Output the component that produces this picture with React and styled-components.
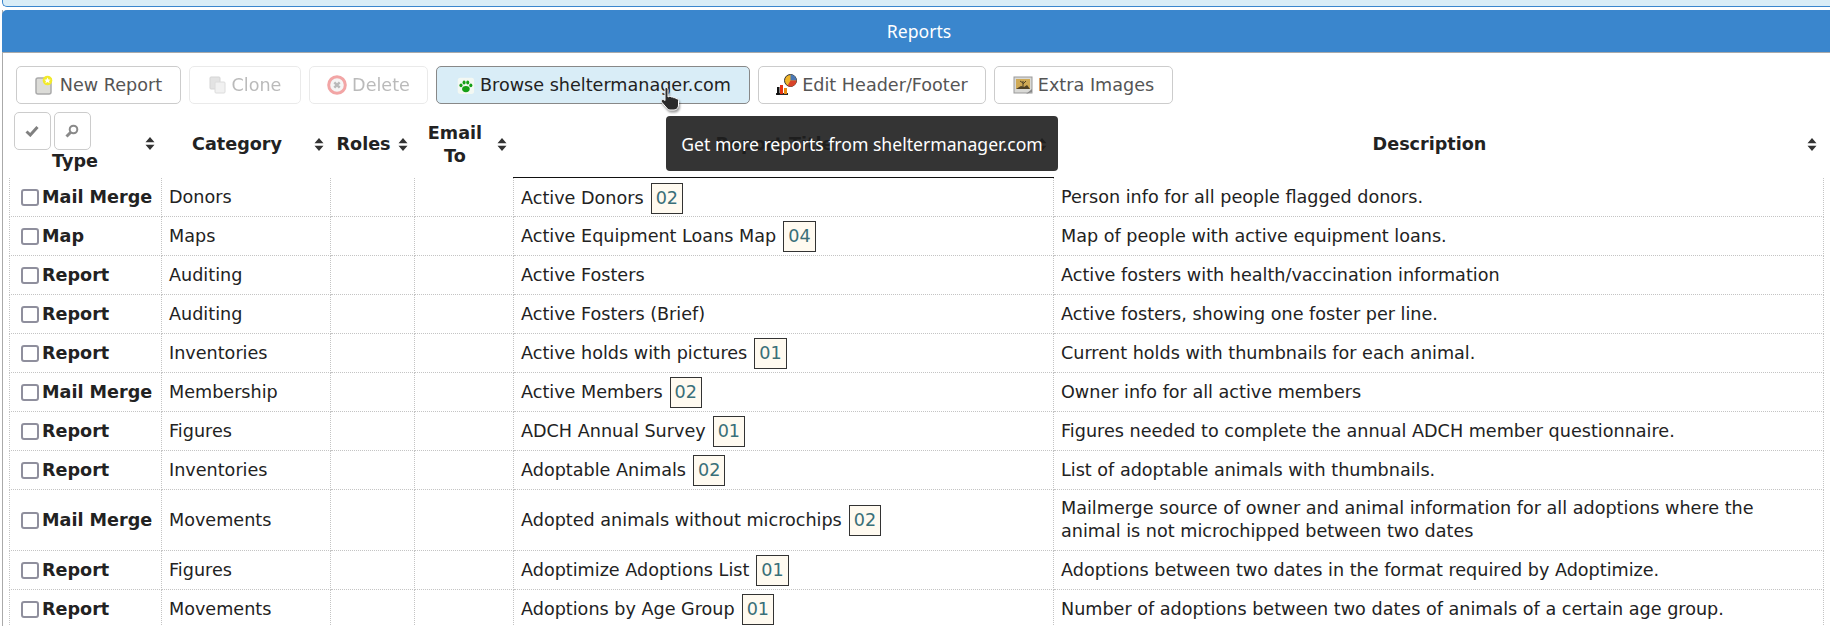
import React from "react";
import styled, { createGlobalStyle } from "styled-components";

const GlobalStyle = createGlobalStyle`
  html, body {
    margin: 0;
    height: 626px;
    overflow: hidden;
    background: #fff;
    font-family: "DejaVu Sans", sans-serif;
    font-size: 17.6px;
    color: #222;
  }
`;

const Page = styled.div`
  position: relative;
  padding-left: 2px;
`;

const Notice = styled.div`
  height: 6px;
  margin-bottom: 3px;
  background: #d9edf7;
  border-bottom: 1px solid #3a86cd;
  border-left: 1px solid #3a86cd;
  border-radius: 0 0 0 5px;
`;

const Panel = styled.section`
  border-left: 1px solid #aaa;
`;

const TitleBar = styled.h2`
  margin: 0 0 0 -1px;
  padding-left: 6px;
  height: 42px;
  line-height: 42px;
  text-align: center;
  font-family: "Noto Sans", sans-serif;
  font-size: 17.6px;
  font-weight: 400;
  color: #fff;
  background: #3a86cd;
  border-bottom: 1px solid #aaa;
  border-radius: 5px 0 0 0;
`;

const Toolbar = styled.div`
  display: flex;
  gap: 8px;
  padding: 13px 0 0 13px;
  height: 38px;
`;

const ToolButton = styled.button`
  display: flex;
  align-items: center;
  justify-content: center;
  gap: 5px;
  width: ${(p) => p.$w}px;
  height: 38px;
  padding: 0;
  font: inherit;
  color: ${(p) => (p.$active ? "#222" : "#555")};
  background: ${(p) => (p.$active ? "#d9edf7" : "#fff")};
  border: 1px solid ${(p) => (p.$active ? "#888" : "#ccc")};
  border-radius: 5px;
  opacity: ${(p) => (p.$disabled ? 0.4 : 1)};
`;

const Table = styled.table`
  width: 1814px;
  margin: 6px 0 0 6px;
  border-collapse: collapse;
  table-layout: fixed;
`;

const Head = styled.th`
  height: 65px;
  padding: 2px 7px 0 6px;
  font-weight: 700;
  vertical-align: middle;
  line-height: 23px;
`;

const HeadInner = styled.div`
  display: flex;
  align-items: center;
`;

const HeadLabel = styled.div`
  flex: 1;
  min-width: 0;
  text-align: center;
`;

const TypeHead = styled.div`
  position: relative;
  margin: -1px 0 4px -2px;
`;

const MiniButtons = styled.div`
  display: flex;
  gap: 3px;
  height: 38px;
`;

const MiniButton = styled.button`
  display: flex;
  align-items: center;
  justify-content: center;
  width: 37px;
  height: 38px;
  padding: 0;
  background: #fff;
  border: 1px solid #ccc;
  border-radius: 5px;
`;

const TypeLabel = styled.div`
  padding-right: 18px;
  text-align: center;
`;

const TypeArrow = styled.div`
  position: absolute;
  right: 0;
  top: 21px;
`;

const Row = styled.tr`
  height: ${(p) => (p.$tall ? 61 : 39)}px;
`;

const Cell = styled.td`
  padding: ${(p) => (p.$first || p.$sorted ? 2 : 0)}px 6px 0 7px;
  line-height: 23px;
  border: 1px dotted #c4c4c4;
  border-top: ${(p) =>
    p.$sorted ? "1px solid #111" : p.$first ? "0" : "1px dotted #c4c4c4"};
  vertical-align: middle;
`;

const TypeCell = styled.div`
  display: flex;
  align-items: center;
  gap: 3px;
  margin-left: 4px;
  font-weight: 700;
  white-space: nowrap;
`;

const Check = styled.span`
  flex: none;
  width: 14px;
  height: 13px;
  background: #fff;
  border: 2px solid #8f8f9d;
  border-radius: 3px;
`;

const Badge = styled.span`
  display: inline-block;
  margin-left: 7px;
  padding: 3px 4px;
  color: #3a6f78;
  background: #fffaf0;
  border: 1px solid #333;
`;

const Tooltip = styled.div`
  position: absolute;
  left: 666px;
  top: 116px;
  width: 392px;
  height: 55px;
  box-sizing: border-box;
  display: flex;
  align-items: center;
  justify-content: center;
  font-family: "Noto Sans", sans-serif;
  font-size: 17.6px;
  color: #fff;
  background: rgba(30, 30, 30, 0.9);
  border-radius: 4px;
  white-space: nowrap;
`;

const Pointer = styled.svg`
  position: absolute;
  left: 660px;
  top: 86px;
  filter: drop-shadow(1px 2px 1px rgba(0, 0, 0, 0.4));
`;

const SortArrows = () => (
  <svg width="10" height="13" viewBox="0 0 10 13" style={{ flex: "none", marginLeft: 7 }}>
    <path d="M5 0l4.500 5.300H.5zM5 13L.5 7.700h9z" fill="#333" />
  </svg>
);

const NewIcon = () => (
  <svg width="20" height="20" viewBox="0 0 20 20">
    <rect x="1" y="3" width="15" height="16" rx="2" fill="#dcdcd8" stroke="#aaa" strokeWidth="1.500" />
    <circle cx="12.500" cy="5.500" r="4.800" fill="#f2ea2a" />
    <path d="M12.500 2.400l1 2.100 2.200.2-1.700 1.400.6 2.200-2.100-1.200-2.100 1.200.6-2.200-1.700-1.400 2.200-.2z" fill="#fff" />
  </svg>
);

const CloneIcon = () => (
  <svg width="18" height="18" viewBox="0 0 18 18">
    <rect x="1" y="1" width="10" height="12" rx="1" fill="#bbb" stroke="#999" />
    <rect x="6" y="6" width="10" height="11" rx="1" fill="#ddd" stroke="#aaa" />
  </svg>
);

const DeleteIcon = () => (
  <svg width="20" height="20" viewBox="0 0 20 20">
    <circle cx="10" cy="10" r="8.300" fill="#e8e8e8" stroke="#e02020" strokeWidth="3" />
    <path d="M7.300 7.300l5.400 5.400M12.700 7.300l-5.400 5.400" stroke="#555" strokeWidth="2.400" />
  </svg>
);

const PawIcon = () => (
  <svg width="20" height="20" viewBox="0 0 22 22">
    <rect x="3" y="3" width="18" height="18" rx="3" fill="#f3f8f3" />
    <g fill="#16a016" transform="translate(3 3)">
      <ellipse cx="9" cy="12.500" rx="4.200" ry="3.400" />
      <ellipse cx="3.600" cy="8.400" rx="1.700" ry="2.100" />
      <ellipse cx="7" cy="5.200" rx="1.700" ry="2.200" />
      <ellipse cx="11" cy="5.200" rx="1.700" ry="2.200" />
      <ellipse cx="14.400" cy="8.400" rx="1.700" ry="2.100" />
    </g>
  </svg>
);

const ChartIcon = () => (
  <svg width="21" height="22" viewBox="0 0 21 22">
    <path d="M0 20h12" stroke="#111" strokeWidth="1.800" />
    <rect x="1" y="13" width="2.500" height="8" fill="#111" />
    <rect x="4" y="11" width="3" height="9" fill="#e63312" />
    <rect x="8" y="14" width="3" height="6" fill="#e88b12" />
    <circle cx="14.500" cy="6.500" r="6" fill="#f0b429" stroke="#333" />
    <path d="M14.500 6.500V.5a6 6 0 0 1 6 6z" fill="#4a78b5" />
    <path d="M14.500 6.500h6a6 6 0 0 1-9 5.200z" fill="#d8432a" />
  </svg>
);

const ImageIcon = () => (
  <svg width="20" height="20" viewBox="0 0 20 20">
    <rect x="1" y="2" width="18" height="16" fill="#d9d9d6" stroke="#999" />
    <rect x="3" y="4" width="14" height="10" fill="#cfa955" />
    <path d="M3 14l5-3 3 1 3-2 3 4z" fill="#4f4126" />
    <path d="M10 12V6M10 9l3-3M10 8L7 6" stroke="#4f4126" strokeWidth="1" />
    <path d="M13 19l6-5v3z" fill="#888" />
  </svg>
);

const CheckIcon = () => (
  <svg width="14" height="12" viewBox="0 0 14 12">
    <path d="M1.500 6.500l3.800 3.500L12.500 2" fill="none" stroke="#808080" strokeWidth="3" />
  </svg>
);

const SearchIcon = () => (
  <svg width="14" height="14" viewBox="0 0 14 14">
    <circle cx="8.500" cy="5.500" r="3.800" fill="none" stroke="#8a8a8a" strokeWidth="2" />
    <path d="M5.500 8.500L1.500 12.500" stroke="#8a8a8a" strokeWidth="3" />
  </svg>
);

const buttons = [
  { label: "New Report", w: 165, icon: <NewIcon /> },
  { label: "Clone", w: 112, icon: <CloneIcon />, disabled: true },
  { label: "Delete", w: 119, icon: <DeleteIcon />, disabled: true },
  { label: "Browse sheltermanager.com", w: 314, icon: <PawIcon />, active: true },
  { label: "Edit Header/Footer", w: 228, icon: <ChartIcon /> },
  { label: "Extra Images", w: 179, icon: <ImageIcon /> },
];

const reports = [
  ["Mail Merge", "Donors", "Active Donors", "02", "Person info for all people flagged donors."],
  ["Map", "Maps", "Active Equipment Loans Map", "04", "Map of people with active equipment loans."],
  ["Report", "Auditing", "Active Fosters", null, "Active fosters with health/vaccination information"],
  ["Report", "Auditing", "Active Fosters (Brief)", null, "Active fosters, showing one foster per line."],
  ["Report", "Inventories", "Active holds with pictures", "01", "Current holds with thumbnails for each animal."],
  ["Mail Merge", "Membership", "Active Members", "02", "Owner info for all active members"],
  ["Report", "Figures", "ADCH Annual Survey", "01", "Figures needed to complete the annual ADCH member questionnaire."],
  ["Report", "Inventories", "Adoptable Animals", "02", "List of adoptable animals with thumbnails."],
  ["Mail Merge", "Movements", "Adopted animals without microchips", "02", "Mailmerge source of owner and animal information for all adoptions where the animal is not microchipped between two dates"],
  ["Report", "Figures", "Adoptimize Adoptions List", "01", "Adoptions between two dates in the format required by Adoptimize."],
  ["Report", "Movements", "Adoptions by Age Group", "01", "Number of adoptions between two dates of animals of a certain age group."],
];

const App = () => {
  return (
    <Page>
      <GlobalStyle />
      <Notice />
      <Panel>
        <TitleBar>Reports</TitleBar>
        <Toolbar>
          {buttons.map((b) => (
            <ToolButton key={b.label} $w={b.w} $active={b.active} $disabled={b.disabled}>
              {b.icon}
              {b.label}
            </ToolButton>
          ))}
        </Toolbar>
        <Table>
          <colgroup>
            <col style={{ width: 152 }} />
            <col style={{ width: 169 }} />
            <col style={{ width: 84 }} />
            <col style={{ width: 99 }} />
            <col style={{ width: 540 }} />
            <col style={{ width: 770 }} />
          </colgroup>
          <thead>
            <tr>
              <Head>
                <TypeHead>
                  <MiniButtons>
                    <MiniButton><CheckIcon /></MiniButton>
                    <MiniButton><SearchIcon /></MiniButton>
                  </MiniButtons>
                  <TypeLabel>Type</TypeLabel>
                  <TypeArrow><SortArrows /></TypeArrow>
                </TypeHead>
              </Head>
              <Head><HeadInner><HeadLabel>Category</HeadLabel><SortArrows /></HeadInner></Head>
              <Head><HeadInner><HeadLabel>Roles</HeadLabel><SortArrows /></HeadInner></Head>
              <Head><HeadInner><HeadLabel>Email To</HeadLabel><SortArrows /></HeadInner></Head>
              <Head><HeadInner><HeadLabel>Report Title</HeadLabel><SortArrows /></HeadInner></Head>
              <Head><HeadInner><HeadLabel>Description</HeadLabel><SortArrows /></HeadInner></Head>
            </tr>
          </thead>
          <tbody>
            {reports.map(([type, category, title, badge, description], i) => (
              <Row key={title} $tall={description.length > 80}>
                <Cell $first={i === 0}><TypeCell><Check />{type}</TypeCell></Cell>
                <Cell $first={i === 0}>{category}</Cell>
                <Cell $first={i === 0} />
                <Cell $first={i === 0} />
                <Cell $sorted={i === 0}>
                  {title}
                  {badge && <Badge>{badge}</Badge>}
                </Cell>
                <Cell $first={i === 0}>{description}</Cell>
              </Row>
            ))}
          </tbody>
        </Table>
      </Panel>
      <Tooltip>Get more reports from sheltermanager.com</Tooltip>
      <Pointer width="24" height="26" viewBox="0 0 24 26">
        <path d="M6 1.500c1 0 2 .8 2 2V11l1-.5c1-.3 1.800 0 2.200.6 1-.4 2-.1 2.400.7 1-.3 2 0 2.400.8 1.400-.2 2.500.6 2.500 2v4.400c0 2.500-1.500 5-4.500 5H10c-1.500 0-2.500-.8-3.300-2L1.500 16c-.6-1 0-2.200 1-2.400 1-.2 1.800.3 2.500 1V3.500c0-1.200.2-2 1-2z" fill="#2b2b2b" stroke="#fff" strokeWidth="1" />
      </Pointer>
    </Page>
  );
};

export default App;
